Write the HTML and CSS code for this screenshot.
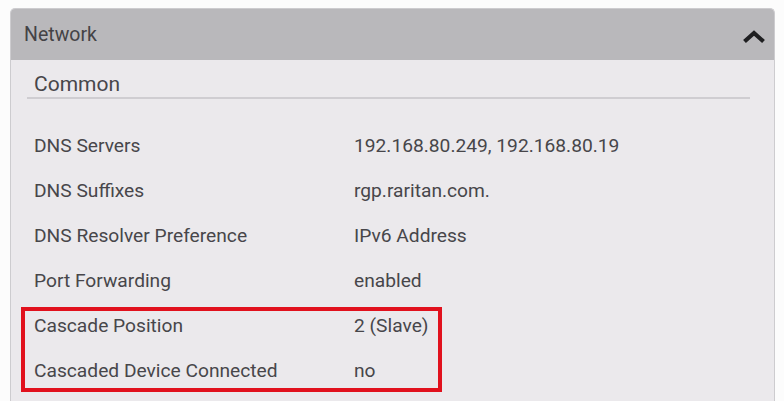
FILE: index.html
```html
<!DOCTYPE html>
<html>
<head>
<meta charset="utf-8">
<link rel="stylesheet" href="styles.css">
</head>
<body>
<div class="panel">
  <div class="panel-header">
    <span class="panel-title">Network</span>
    <svg class="chevron" width="24" height="15" viewBox="0 0 24 15"><polyline points="2.5,12.5 12,4 21.5,12.5" fill="none" stroke="#1f1f21" stroke-width="4.2" stroke-linejoin="miter" stroke-linecap="butt"/></svg>
  </div>
  <div class="section">
    <div class="section-title">Common</div>
    <div class="rows">
      <div class="row"><span class="label">DNS Servers</span><span class="value">192.168.80.249, 192.168.80.19</span></div>
      <div class="row"><span class="label">DNS Suffixes</span><span class="value">rgp.raritan.com.</span></div>
      <div class="row"><span class="label">DNS Resolver Preference</span><span class="value">IPv6 Address</span></div>
      <div class="row"><span class="label">Port Forwarding</span><span class="value">enabled</span></div>
      <div class="highlight">
        <div class="row"><span class="label">Cascade Position</span><span class="value">2 (Slave)</span></div>
        <div class="row"><span class="label">Cascaded Device Connected</span><span class="value">no</span></div>
      </div>
    </div>
  </div>
</div>
</body>
</html>
```
FILE: styles.css
```css
html, body {
  margin: 0;
  padding: 0;
  background: #fcfcfc;
}
body {
  font-family: Roboto, "Liberation Sans", sans-serif;
  color: #47464a;
  overflow: hidden;
}
.panel {
  margin: 8px 0 0 10px;
  width: 763px;
  height: 392px;
  border: 1px solid #cdcccf;
  border-bottom: none;
  border-radius: 5px 5px 0 0;
  background: #ebe9ec;
  overflow: hidden;
}
.panel-header {
  height: 51px;
  background: #b9b8bb;
  display: flex;
  align-items: center;
  justify-content: space-between;
  padding: 0 8px 0 13px;
}
.panel-title {
  font-size: 19.5px;
  color: #444346;
}
.chevron {
  margin-top: 4px;
}
.section {
  margin: 0 24px 0 16px;
}
.section-title {
  font-size: 21px;
  line-height: 26px;
  padding: 11px 0 0 7px;
  border-bottom: 2px solid #cfcdd1;
  color: #47464a;
}
.rows {
  margin-top: 24px;
}
.row {
  display: flex;
  height: 45px;
  line-height: 45px;
  font-size: 19.2px;
  padding-left: 7px;
}
.label {
  width: 320px;
  flex: none;
}
.highlight {
  position: relative;
}
.highlight::after {
  content: "";
  position: absolute;
  top: 4px;
  left: -6px;
  width: 413px;
  height: 77px;
  border: 4px solid #e1111d;
}
```
